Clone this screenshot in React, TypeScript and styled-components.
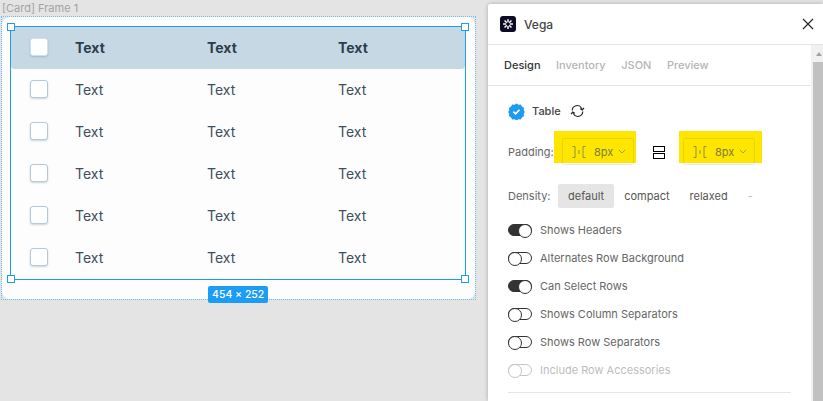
import * as React from "react";
import styled, { createGlobalStyle } from "styled-components";

const GlobalStyle = createGlobalStyle`
  html, body {
    margin: 0;
    padding: 0;
    width: 823px;
    height: 401px;
    overflow: hidden;
    background: #e4e4e4;
  }
  * {
    box-sizing: border-box;
  }
`;

const rows = [0, 1, 2, 3, 4];
const columns = ["Text", "Text", "Text"];

function Logo() {
  return (
    <LogoBox>
      <svg viewBox="0 0 16 16" fill="none" stroke="#fff" strokeWidth="2">
        <path d="M8 1.5v4M8 10.5v4M1.5 8h4M10.5 8h4M3.4 3.4l3 3M9.6 9.6l3 3M12.6 3.4l-3 3M6.4 9.6l-3 3" />
      </svg>
    </LogoBox>
  );
}

function VerifiedIcon() {
  return (
    <svg width="17" height="17" viewBox="0 0 17 17">
      <path
        d="M8.5.6l2 1.1 2.3-.1 1.1 2 2 1.2-.1 2.3 1 1.9-1 2 .1 2.2-2 1.2-1.1 2-2.3-.1-2 1.1-2-1.1-2.3.1-1.1-2-2-1.2.1-2.2-1-2 1-1.9-.1-2.3 2-1.2 1.1-2 2.3.1z"
        fill="#1e9bf0"
      />
      <path d="M5.4 8.7l2.2 2.1 3.9-4" fill="none" stroke="#fff" strokeWidth="1.6" />
    </svg>
  );
}

function SyncIcon() {
  return (
    <svg width="15" height="14" viewBox="0 0 15 14" fill="none" stroke="#222" strokeWidth="1.1">
      <path d="M2.2 6.4A5 5 0 0 1 11.6 4.2l.7 1.6" />
      <path d="M14 3.8l-1.7 2.2-2.3-1.4" />
      <path d="M12.8 7.6A5 5 0 0 1 3.4 9.8l-.7-1.6" />
      <path d="M1 10.2l1.7-2.2 2.3 1.4" />
    </svg>
  );
}

function PaddingSelect({ inset, width }: { inset: number; width: number }) {
  return (
    <Highlight $inset={inset} $width={width}>
      <PaddingInput>
        <svg width="14" height="12" viewBox="0 0 14 12" fill="none" stroke="#8f8f4a" strokeWidth="1">
          <path d="M.5.5h2.5v11H.5M13.5.5H11v11h2.5M7 4v4" />
        </svg>
        <PaddingValue>8px</PaddingValue>
        <svg width="8" height="5" viewBox="0 0 8 5" fill="none" stroke="#9a9a50" strokeWidth="0.9">
          <path d="M.8.8 4 4l3.2-3.2" />
        </svg>
      </PaddingInput>
    </Highlight>
  );
}

function App() {
  return (
    <>
      <GlobalStyle />
      <Page>
        <Canvas>
          <FrameLabel>[Card] Frame 1</FrameLabel>
          <FrameBounds>
            <Card>
              <Table>
                <HeadRow>
                  <CheckCell>
                    <Checkbox $head />
                  </CheckCell>
                  {columns.map((c, i) => (
                    <Cell key={i} $head>
                      {c}
                    </Cell>
                  ))}
                </HeadRow>
                {rows.map((r) => (
                  <BodyRow key={r}>
                    <CheckCell>
                      <Checkbox />
                    </CheckCell>
                    {columns.map((c, i) => (
                      <Cell key={i}>{c}</Cell>
                    ))}
                  </BodyRow>
                ))}
                <Handle $x="left" $y="top" />
                <Handle $x="right" $y="top" />
                <Handle $x="left" $y="bottom" />
                <Handle $x="right" $y="bottom" />
                <SizeBadge>454 × 252</SizeBadge>
              </Table>
            </Card>
          </FrameBounds>
        </Canvas>
        <Panel>
          <PanelHeader>
            <Logo />
            <PanelTitle>Vega</PanelTitle>
            <CloseIcon width="12" height="12" viewBox="0 0 12 12" fill="none" stroke="#222" strokeWidth="1.1">
              <path d="M1 1l10 10M11 1 1 11" />
            </CloseIcon>
          </PanelHeader>
          <PanelBody>
            <PanelContent>
              <Tabs>
                <Tab $active>Design</Tab>
                <Tab>Inventory</Tab>
                <Tab>JSON</Tab>
                <Tab>Preview</Tab>
              </Tabs>
              <Section>
                <ComponentRow>
                  <VerifiedIcon />
                  <ComponentName>Table</ComponentName>
                  <SyncIcon />
                </ComponentRow>
                <PaddingRow>
                  <PaddingLabel>Padding:</PaddingLabel>
                  <PaddingSelect inset={8} width={82} />
                  <SplitIcon>
                    <span />
                    <span />
                  </SplitIcon>
                  <PaddingSelect inset={4} width={83} />
                </PaddingRow>
                <DensityRow>
                  <DensityLabel>Density:</DensityLabel>
                  <DensityOption $active>default</DensityOption>
                  <DensityOption>compact</DensityOption>
                  <DensityOption>relaxed</DensityOption>
                  <DensityOption $muted>-</DensityOption>
                </DensityRow>
                <ToggleList>
                  <ToggleRow>
                    <Toggle $on />
                    Shows Headers
                  </ToggleRow>
                  <ToggleRow>
                    <Toggle />
                    Alternates Row Background
                  </ToggleRow>
                  <ToggleRow>
                    <Toggle $on />
                    Can Select Rows
                  </ToggleRow>
                  <ToggleRow>
                    <Toggle />
                    Shows Column Separators
                  </ToggleRow>
                  <ToggleRow>
                    <Toggle />
                    Shows Row Separators
                  </ToggleRow>
                  <ToggleRow $disabled>
                    <Toggle $disabled />
                    Include Row Accessories
                  </ToggleRow>
                </ToggleList>
                <Divider />
              </Section>
            </PanelContent>
            <Scrollbar>
              <ScrollArrow />
              <ScrollThumb />
            </Scrollbar>
          </PanelBody>
        </Panel>
      </Page>
    </>
  );
}
export default App;

const Page = styled.div`
  width: 823px;
  height: 401px;
  display: flex;
  align-items: flex-start;
  overflow: hidden;
  font-family: Inter, "Liberation Sans", sans-serif;
`;

const Canvas = styled.div`
  width: 488px;
  padding: 2px 0 0 2px;
  flex: none;
`;

const FrameLabel = styled.div`
  height: 14px;
  font-size: 11px;
  line-height: 13px;
  color: #a3a3a3;
`;

const FrameBounds = styled.div`
  width: 475px;
  height: 284px;
  margin-left: -1px;
  display: flex;
  border: 1px dotted #6dbdf5;
`;

const Card = styled.div`
  flex: 1;
  padding: 10px 0 0 9px;
  background: #fdfdfd;
  border-radius: 8px;
`;

const Table = styled.div`
  position: relative;
  width: 454px;
  height: 252px;
  outline: 1px solid #1b9cf5;
`;

const rowGrid = `
  display: grid;
  grid-template-columns: 64px 132px 131px 1fr;
  align-items: center;
  height: 42px;
`;

const HeadRow = styled.div`
  ${rowGrid}
  background: #c6d8e4;
  border-radius: 0 0 4px 4px;
`;

const BodyRow = styled.div`
  ${rowGrid}
`;

const CheckCell = styled.div`
  display: flex;
  justify-content: center;
  padding: 0 8px 2px 0;
`;

const Checkbox = styled.div<{ $head?: boolean }>`
  width: 18px;
  height: 18px;
  background: #fff;
  border: 1px solid ${(p) => (p.$head ? "#d4e0e9" : "#b4c9da")};
  border-radius: 3px;
  box-shadow: 0 1px 2px rgba(60, 90, 120, 0.25);
`;

const Cell = styled.div<{ $head?: boolean }>`
  padding-bottom: 2px;
  font-size: 14px;
  font-weight: ${(p) => (p.$head ? 700 : 400)};
  color: ${(p) => (p.$head ? "#2c3e4e" : "#3e4e5c")};
`;

const Handle = styled.div<{ $x: "left" | "right"; $y: "top" | "bottom" }>`
  position: absolute;
  ${(p) => p.$x}: -4px;
  ${(p) => p.$y}: -4px;
  width: 8px;
  height: 8px;
  background: #fff;
  border: 1px solid #1b9cf5;
`;

const SizeBadge = styled.div`
  position: absolute;
  left: 197px;
  top: 259px;
  height: 17px;
  padding: 0 4px;
  background: #1b9cf5;
  border-radius: 2px;
  color: #fff;
  font-size: 10.5px;
  font-weight: 500;
  line-height: 17px;
  white-space: nowrap;
`;

const Panel = styled.div`
  width: 335px;
  height: 397px;
  margin-top: 4px;
  background: #fff;
  border-radius: 2px 0 0 0;
  box-shadow: 0 0 4px rgba(0, 0, 0, 0.25);
  flex: none;
`;

const PanelHeader = styled.div`
  height: 41px;
  padding: 0 9px 0 12px;
  display: flex;
  align-items: center;
  border-bottom: 1px solid #e5e5e5;
`;

const LogoBox = styled.div`
  width: 16px;
  height: 16px;
  background: #0c0c24;
  border-radius: 3px;
  display: flex;
  align-items: center;
  justify-content: center;
  flex: none;

  svg {
    width: 12px;
    height: 12px;
  }
`;

const PanelTitle = styled.div`
  margin-left: 8px;
  font-size: 12px;
  font-weight: 500;
  color: #444;
  flex: 1;
`;

const CloseIcon = styled.svg`
  flex: none;
`;

const PanelBody = styled.div`
  display: flex;
  height: 356px;
`;

const PanelContent = styled.div`
  flex: 1;
  min-width: 0;
`;

const Tabs = styled.div`
  height: 41px;
  padding: 0 0 0 16px;
  display: flex;
  align-items: center;
  gap: 15.5px;
  border-bottom: 1px solid #e5e5e5;
`;

const Tab = styled.div<{ $active?: boolean }>`
  font-size: 11px;
  font-weight: 500;
  color: ${(p) => (p.$active ? "#333" : "#b5b5b5")};
`;

const Section = styled.div`
  padding: 13px 0 0 20px;
`;

const ComponentRow = styled.div`
  display: flex;
  align-items: center;
  height: 24px;
`;

const ComponentName = styled.div`
  margin: 0 9px 0 7px;
  font-size: 11px;
  font-weight: 500;
  color: #444;
`;

const PaddingLabel = styled.div`
  width: 46px;
  margin-top: 10px;
  font-size: 11px;
  color: #666;
  white-space: nowrap;
  flex: none;
`;

const DensityLabel = styled.div`
  width: 50px;
  font-size: 11px;
  color: #666;
  white-space: nowrap;
  flex: none;
`;

const PaddingRow = styled.div`
  display: flex;
  align-items: center;
  height: 32px;
  margin-top: 8px;
`;

const Highlight = styled.div<{ $inset: number; $width: number }>`
  width: ${(p) => p.$width}px;
  height: 32px;
  padding: 7px 0 0 ${(p) => p.$inset}px;
  background: #ffe600;
  flex: none;
`;

const PaddingInput = styled.div`
  width: 72px;
  height: 27px;
  padding: 0 7px 0 9px;
  display: flex;
  align-items: center;
  border: 1px solid rgba(0, 0, 0, 0.08);
  border-radius: 2px;
`;

const PaddingValue = styled.div`
  flex: 1;
  margin-left: 8px;
  font-size: 11px;
  color: #7c7c3c;
`;

const SplitIcon = styled.div`
  width: 12px;
  margin: 10px 14px 0 17px;
  display: flex;
  flex-direction: column;
  gap: 1px;
  flex: none;

  span {
    height: 6px;
    border: 1.3px solid #000;
  }
`;

const DensityRow = styled.div`
  display: flex;
  align-items: center;
  height: 24px;
  margin-top: 21px;
`;

const DensityOption = styled.div<{ $active?: boolean; $muted?: boolean }>`
  height: 24px;
  padding: 0 10px;
  font-size: 11px;
  line-height: 25px;
  border-radius: 2px;
  background: ${(p) => (p.$active ? "#e5e5e5" : "transparent")};
  color: ${(p) => (p.$muted ? "#bbb" : "#555")};
`;

const ToggleList = styled.div`
  margin-top: 8px;
  display: flex;
  flex-direction: column;
`;

const ToggleRow = styled.div<{ $disabled?: boolean }>`
  display: flex;
  align-items: center;
  gap: 8px;
  height: 28px;
  font-size: 11px;
  color: ${(p) => (p.$disabled ? "#bdbdbd" : "#666")};
`;

const Toggle = styled.div<{ $on?: boolean; $disabled?: boolean }>`
  position: relative;
  width: 24px;
  height: 12px;
  border-radius: 6px;
  border: 1px solid ${(p) => (p.$disabled ? "#c4c4c4" : "#333")};
  background: ${(p) => (p.$on ? "#333" : "#fff")};

  &::after {
    content: "";
    position: absolute;
    top: -1px;
    ${(p) => (p.$on ? "right: -1px;" : "left: -1px;")}
    width: 12px;
    height: 12px;
    border-radius: 50%;
    background: #fff;
    border: 1px solid ${(p) => (p.$disabled ? "#c4c4c4" : "#333")};
  }
`;

const Divider = styled.div`
  width: 283px;
  height: 1px;
  margin-top: 8px;
  background: #e5e5e5;
`;

const Scrollbar = styled.div`
  width: 12px;
  flex: none;
  background: #f1f1f1;
  display: flex;
  flex-direction: column;
`;

const ScrollArrow = styled.div`
  height: 17px;
  position: relative;

  &::after {
    content: "";
    position: absolute;
    left: 5px;
    top: 7px;
    border-left: 3px solid transparent;
    border-right: 3px solid transparent;
    border-bottom: 4px solid #a3a3a3;
  }
`;

const ScrollThumb = styled.div`
  flex: 1;
  margin-left: 2px;
  background: #c1c1c1;
`;
